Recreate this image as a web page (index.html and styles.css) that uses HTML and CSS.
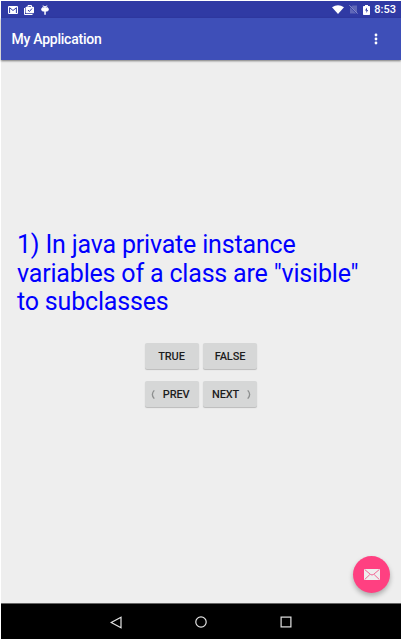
FILE: index.html
```html
<!DOCTYPE html>
<html lang="en">
<head>
<meta charset="utf-8">
<title>My Application</title>
<link rel="stylesheet" href="styles.css">
</head>
<body>
<div class="screen">
  <div class="status">
    <div class="notes">
      <svg width="10" height="8" viewBox="0 0 10 8"><rect width="10" height="8" rx="1" fill="#fff"/><path d="M1.6 7V1.7L5 4.5l3.400-2.800V7" fill="none" stroke="#303aa4" stroke-width="1"/></svg>
      <svg width="10" height="10" viewBox="0 0 10 10"><path d="M.5 3v6.500H8.500" fill="none" stroke="#fff"/><path d="M4 2V.5h3.500V2" fill="none" stroke="#fff"/><rect x="1.600" y="1.800" width="8.400" height="6.500" rx=".8" fill="#fff"/><path d="M4 5l1.400 1.500L8 3.500" fill="none" stroke="#303aa4"/></svg>
      <svg width="8" height="10" viewBox="0 0 8 10"><path d="M1 3.500C1 .2 7 .2 7 3.500V5.500Q7 6.500 6 6.500H4.800V9.700H3.300V6.500H2Q1 6.500 1 5.500Z" fill="#fff"/><path d="M.5 3.300v2.200M7.500 3.300v2.200M2 .3l.8 1.200M6 .3l-.8 1.200" stroke="#fff" stroke-width=".8"/><path d="M2.500 2.500h.7M4.800 2.500h.7" stroke="#303aa4" stroke-width=".7"/></svg>
    </div>
    <div class="system">
      <svg width="12" height="9" viewBox="0 0 12 9"><path d="M0 2.300Q6-1.900 12 2.300L6 9Z" fill="#fff"/></svg>
      <svg width="9" height="9" viewBox="0 0 9 9"><path d="M3.500.5H8V8.500H1V3Z" fill="#5f67b8"/><path d="M.3.700L8.700 9" stroke="#303aa4" stroke-width="1.200"/><path d="M.3.200L8.700 8.600" stroke="#9499d2" stroke-width=".9"/></svg>
      <svg width="7" height="10" viewBox="0 0 7 10"><path d="M2 0h3v1h1.300Q7 1 7 1.700V9.300Q7 10 6.300 10H.7Q0 10 0 9.300V1.700Q0 1 .7 1H2Z" fill="#fff"/><path d="M4 2.500L2 5.500h1.400V8L5.100 5H4Z" fill="#303aa4"/></svg>
      <span class="clock">8:53</span>
    </div>
  </div>
  <header class="appbar">
    <h1>My Application</h1>
    <svg width="4" height="12" viewBox="0 0 4 12" fill="#fff"><circle cx="2" cy="2" r="1.400"/><circle cx="2" cy="6" r="1.400"/><circle cx="2" cy="10" r="1.400"/></svg>
  </header>
  <main class="content">
    <p class="question">1) In java private instance<br>variables of a class are "visible"<br>to subclasses</p>
    <div class="buttons">
      <button>TRUE</button>
      <button>FALSE</button>
      <button class="prev"><svg width="4" height="9" viewBox="0 0 4 9"><path d="M3.300.4Q-.6 4.500 3.300 8.600" fill="none" stroke="#8d8f8f" stroke-width="1.300"/></svg>PREV</button>
      <button class="next">NEXT<svg width="4" height="9" viewBox="0 0 4 9"><path d="M.7.4Q4.600 4.500 .7 8.600" fill="none" stroke="#8d8f8f" stroke-width="1.300"/></svg></button>
    </div>
    <div class="fab"><svg width="16" height="11" viewBox="0 0 16 11"><rect width="16" height="11" rx=".8" fill="#eee"/><path d="M.8.6L6.300 5.300Q8 6.700 9.700 5.300L15.200.6M.8 10.400L5.800 5.600M15.200 10.400L10.200 5.600" fill="none" stroke="#f0568a" stroke-width=".9"/></svg></div>
  </main>
  <nav class="navbar">
    <svg width="12" height="13" viewBox="0 0 12 13"><path d="M11 1.200V11.800L1.200 6.500Z"/></svg>
    <svg width="12" height="12" viewBox="0 0 12 12"><circle cx="6" cy="6" r="5.200"/></svg>
    <svg width="12" height="12" viewBox="0 0 12 12"><rect x="1.100" y="1.100" width="9.800" height="9.800"/></svg>
  </nav>
</div>
</body>
</html>
```
FILE: styles.css
```css
body {
  margin: 0;
  background: #fff;
  font-family: Roboto, sans-serif;
}
svg {
  display: block;
  flex: none;
}
.screen {
  box-sizing: border-box;
  height: 639px;
  padding: 1px 0 0 1px;
  display: flex;
  flex-direction: column;
  overflow: hidden;
}
.status {
  height: 17px;
  background: #303aa4;
  display: flex;
  justify-content: space-between;
  align-items: center;
  padding: 0 5px 0 7px;
}
.notes {
  display: flex;
  align-items: center;
  gap: 6px;
}
.notes svg:last-child {
  margin-left: 1px;
}
.system {
  display: flex;
  align-items: center;
  gap: 4px;
}
.system svg:first-child {
  margin-right: 1px;
}
.system svg:nth-child(2) {
  margin-right: 1px;
}
.clock {
  color: #fff;
  font-size: 11px;
  font-weight: 500;
  line-height: 17px;
}
.appbar {
  height: 42px;
  background: #3e4fb8;
  display: flex;
  justify-content: space-between;
  align-items: center;
  padding: 0 23px 0 10.500px;
  box-shadow: 0 1px 2px rgba(0, 0, 0, .5);
  position: relative;
  z-index: 1;
}
.appbar h1 {
  margin: 0;
  color: #fff;
  font-size: 14px;
  font-weight: 500;
  letter-spacing: -.25px;
}
.content {
  flex: 1;
  position: relative;
  background: #eee;
  display: flex;
  flex-direction: column;
}
.question {
  margin: 171px 0 0 16px;
  color: #00f;
  font-size: 25px;
  line-height: 28.500px;
  letter-spacing: -.18px;
  white-space: nowrap;
}
.buttons {
  display: grid;
  grid-template-columns: 54px 54px;
  grid-auto-rows: 26px;
  gap: 12px 4.500px;
  margin: 26px 0 0 143.500px;
}
button {
  display: flex;
  align-items: center;
  justify-content: center;
  border: 0;
  border-radius: 2px;
  padding: 1px 0 0;
  background: #d6d7d7;
  color: #1d1d1d;
  font: 500 11px Roboto, sans-serif;
  letter-spacing: -.15px;
  box-shadow: 0 1px 1px rgba(0, 0, 0, .22);
}
.prev {
  justify-content: space-between;
  padding: 1px 9px 0 6px;
}
.next {
  justify-content: space-between;
  padding: 1px 6px 0 9px;
}
.fab {
  position: absolute;
  right: 11px;
  bottom: 10.500px;
  width: 37px;
  height: 37px;
  border-radius: 50%;
  background: #ff4081;
  display: flex;
  align-items: center;
  justify-content: center;
  box-shadow: 0 3px 5px rgba(0, 0, 0, .28);
}
.navbar {
  height: 35px;
  border-top: 1px solid #666;
  background: #000;
  display: flex;
  justify-content: center;
  align-items: center;
  gap: 73px;
}
.navbar svg {
  fill: none;
  stroke: #e4e4e4;
  stroke-width: 1.200;
  position: relative;
  top: .5px;
}
```
